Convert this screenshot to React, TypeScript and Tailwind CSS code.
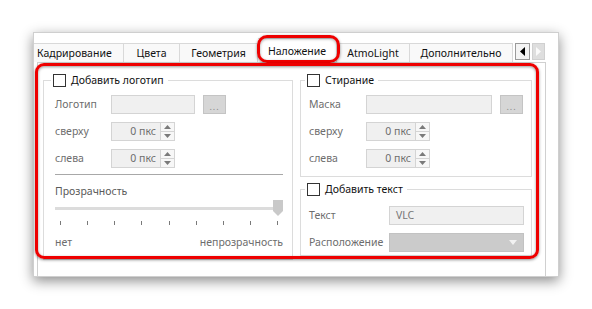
import { FC } from 'react'

const Check: FC = () => (
  <span className="block w-[13px] h-[13px] border border-[#333] bg-white"></span>
)

const Field: FC<{ w: string; text?: string }> = ({ w, text }) => (
  <div className={`${w} h-[19px] border border-[#d4d4d4] bg-[#f0f0f0] pl-[6px] leading-[17px] text-[#777]`}>
    {text}
  </div>
)

const Dots: FC = () => (
  <div className="w-[23px] h-[19px] border border-[#c4c4c4] bg-[#d6d6d6] flex items-end justify-center pb-[2px]">
    <span className="text-[9px] leading-[9px] text-[#8a8a8a] tracking-[1px]">...</span>
  </div>
)

const Spin: FC = () => (
  <div className="flex w-[64px] h-[19px] border border-[#d4d4d4] bg-[#f0f0f0]">
    <div className="flex-1 text-right pr-[4px] leading-[17px] text-[#6d6d6d]">0 пкс</div>
    <div className="w-[14px] flex flex-col border-l border-[#d4d4d4] bg-[#f7f7f7]">
      <div className="flex-1 flex items-center justify-center border-b border-[#d4d4d4]">
        <svg width="7" height="4" viewBox="0 0 7 4">
          <path d="M0 4 L3.5 0 L7 4 Z" fill="#7a7a7a" />
        </svg>
      </div>
      <div className="flex-1 flex items-center justify-center">
        <svg width="7" height="4" viewBox="0 0 7 4">
          <path d="M0 0 L3.5 4 L7 0 Z" fill="#7a7a7a" />
        </svg>
      </div>
    </div>
  </div>
)

const Row: FC<{ label: string; lw: string; children: React.ReactNode }> = ({ label, lw, children }) => (
  <div className="flex items-center">
    <span className={`${lw} text-[#6d6d6d]`}>{label}</span>
    {children}
  </div>
)

const Legend: FC<{ label: string }> = ({ label }) => (
  <legend className="-ml-[4px] px-[2px] pr-[4px]">
    <span className="flex items-center gap-[5px] text-[#111]">
      <Check />
      <span className="leading-[13px]">{label}</span>
    </span>
  </legend>
)

const tabs = [
  { t: 'Кадрирование', w: 'w-[90px] pl-[3px] justify-start' },
  { t: 'Цвета', w: 'w-[56px] justify-center' },
  { t: 'Геометрия', w: 'w-[78px] justify-center' },
]
const tabs2 = [
  { t: 'AtmoLight', w: 'w-[73px] justify-center' },
  { t: 'Дополнительно', w: 'w-[103px] justify-center' },
]

export default function App() {
  return (
    <div className="relative w-[592px] h-[309px] overflow-hidden bg-white text-[10.5px] font-['Noto_Sans',sans-serif]">
      <div className="pt-[32px] pl-[33px]">
        <div className="w-[526px] h-[245px] bg-white border border-[#cfcfcf] shadow-[0_4px_12px_rgba(0,0,0,0.45)] flex flex-col overflow-hidden">
          {/* tabs */}
          <div className="flex items-end h-[29px] pt-[5px]">
            {tabs.map((x) => (
              <div key={x.t} className={`${x.w} h-[19px] pt-[2px] flex items-center border-t border-r border-[#d9d9d9] bg-[#f9f9f9] text-[#111]`}>
                {x.t}
              </div>
            ))}
            <div className="w-[79px] h-[24px] pt-[3px] flex items-center justify-center bg-white text-[#111] border-t border-r border-[#d9d9d9]">
              Наложение
            </div>
            {tabs2.map((x) => (
              <div key={x.t} className={`${x.w} h-[19px] pt-[2px] flex items-center border-t border-r border-[#d9d9d9] bg-[#f9f9f9] text-[#111]`}>
                {x.t}
              </div>
            ))}
            <div className="flex items-center gap-[2px] ml-[2px] mb-[2px]">
              <div className="w-[15px] h-[17px] border border-[#9a9a9a] bg-[#f4f4f4] flex items-center justify-center">
                <svg width="5" height="9" viewBox="0 0 5 9">
                  <path d="M5 0 L0 4.5 L5 9 Z" fill="#000" />
                </svg>
              </div>
              <div className="w-[13px] h-[17px] border border-[#d0d0d0] bg-[#dedede] flex items-center justify-center">
                <svg width="5" height="9" viewBox="0 0 5 9">
                  <path d="M0 0 L5 4.5 L0 9 Z" fill="#fafafa" />
                </svg>
              </div>
            </div>
          </div>

          {/* panel */}
          <div className="ml-[3px] w-[509px] flex-1 border-l border-t border-r border-[#d0d0d0] bg-white pl-[5px] pt-[11px] flex gap-[7px]">
            <fieldset className="w-[250px] h-[186px] border border-[#dcdcdc] pl-[11px] pr-[9px] flex flex-col">
              <Legend label="Добавить логотип" />
              <div className="mt-[8px] flex flex-col gap-[8px]">
                <Row label="Логотип" lw="w-[56px]">
                  <Field w="w-[84px]" />
                  <div className="ml-[8px]"><Dots /></div>
                </Row>
                <Row label="сверху" lw="w-[56px]"><Spin /></Row>
                <Row label="слева" lw="w-[56px]"><Spin /></Row>
              </div>
              <div className="mt-[6px] h-px bg-[#a8a8a8]"></div>
              <div className="mt-[9px] leading-[14px] text-[#5a5a5a]">Прозрачность</div>
              <div className="mt-[2px] relative h-[16px] flex items-center">
                <div className="flex-1 h-[3px] bg-[#dcdcdc]"></div>
                <svg className="absolute right-0 top-0" width="10" height="16" viewBox="0 0 10 16">
                  <path d="M0 0 H10 V11 L5 16 L0 11 Z" fill="#c9c9c9" />
                </svg>
              </div>
              <div className="mt-[5px] px-[5px] flex justify-between">
                {Array.from({ length: 9 }).map((_, i) => (
                  <span key={i} className="block w-px h-[4px] bg-[#7a7a7a]"></span>
                ))}
              </div>
              <div className="mt-[10px] flex justify-between leading-[14px] text-[#6d6d6d]">
                <span>нет</span>
                <span>непрозрачность</span>
              </div>
            </fieldset>

            <div className="flex flex-col gap-[6px]">
              <fieldset className="w-[232px] border border-[#dcdcdc] pl-[8px] pb-[8px] flex flex-col">
                <Legend label="Стирание" />
                <div className="mt-[8px] flex flex-col gap-[8px]">
                  <Row label="Маска" lw="w-[57px]">
                    <Field w="w-[126px]" />
                    <div className="ml-[8px]"><Dots /></div>
                  </Row>
                  <Row label="сверху" lw="w-[57px]"><Spin /></Row>
                  <Row label="слева" lw="w-[57px]"><Spin /></Row>
                </div>
              </fieldset>
              <fieldset className="w-[232px] h-[73px] border border-[#dcdcdc] pl-[8px] flex flex-col">
                <Legend label="Добавить текст" />
                <div className="mt-[10px] flex flex-col gap-[8px]">
                  <Row label="Текст" lw="w-[80px]">
                    <Field w="w-[135px]" text="VLC" />
                  </Row>
                  <Row label="Расположение" lw="w-[80px]">
                    <div className="w-[135px] h-[19px] border border-[#c2c2c2] bg-[#cbcbcb] flex items-center justify-end pr-[6px]">
                      <svg width="8" height="5" viewBox="0 0 8 5">
                        <path d="M0 0 H8 L4 5 Z" fill="#f2f2f2" />
                      </svg>
                    </div>
                  </Row>
                </div>
              </fieldset>
            </div>
          </div>
        </div>
      </div>

      {/* red highlight marks */}
      <div className="absolute left-[257px] top-[35px] w-[83px] h-[28px] rounded-[10px] border-[3px] border-[#ee0000] shadow-[0_1px_3px_rgba(0,0,0,0.45),inset_0_1px_3px_rgba(0,0,0,0.35)]"></div>
      <div className="absolute left-[35px] top-[63px] w-[504px] h-[196px] rounded-[9px] border-[3px] border-[#ee0000] shadow-[0_1px_3px_rgba(0,0,0,0.45),inset_0_1px_3px_rgba(0,0,0,0.4)]"></div>
    </div>
  )
}
